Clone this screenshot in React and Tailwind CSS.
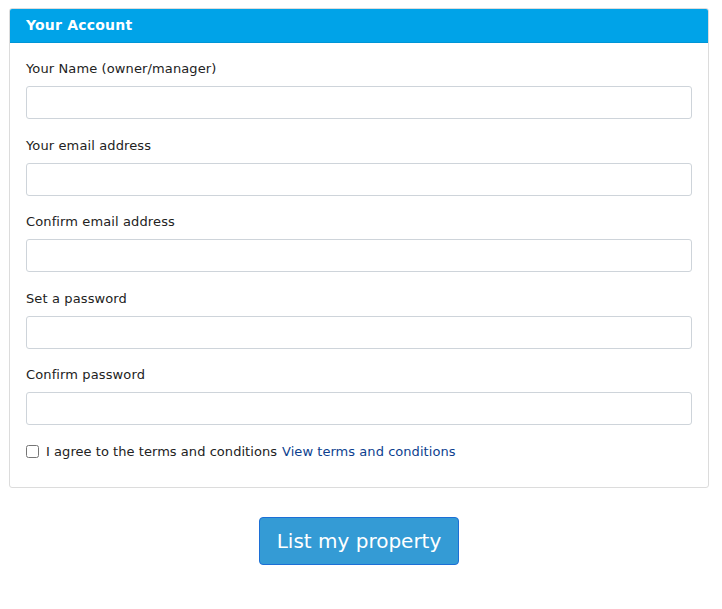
export default function App() {
    const fields = [
        'Your Name (owner/manager)',
        'Your email address',
        'Confirm email address',
        'Set a password',
        'Confirm password',
    ];

    return (
        <div className="min-h-screen bg-white pt-[8px] pl-[9px] text-[#222]" style={{ fontFamily: '"DejaVu Sans", Verdana, sans-serif' }}>
            <div className="w-[700px] rounded-[3px] border border-[#dcdcdc]">
                <div className="h-[34px] rounded-t-[2px] bg-[#00a3e8] px-4 flex items-center border-b border-[#0095d6]">
                    <span className="text-[14px] font-bold text-white tracking-[0.2px]">Your Account</span>
                </div>
                <div className="px-4 pt-[16px] pb-[25px]">
                    {fields.map((label) => (
                        <div key={label} className="mb-[16.5px]">
                            <label className="block h-[20px] leading-[20px] text-[13px] mb-[7px] tracking-[0.12px]">{label}</label>
                            <input
                                type="text"
                                className="block w-full h-[33px] rounded-[3px] border border-[#ced4da] bg-white px-3 text-[13px] focus:outline-none"
                            />
                        </div>
                    ))}
                    <div className="flex items-center h-[20px] text-[13px] tracking-[0.05px]">
                        <input type="checkbox" className="w-[13px] h-[13px] mr-[7px] m-0" />
                        <span>I agree to the terms and conditions</span>
                        <a href="#" className="ml-[5px] text-[#0d3f8f]">View terms and conditions</a>
                    </div>
                </div>
            </div>
            <div className="w-[700px] flex justify-center mt-[29px]">
                <button className="w-[200px] h-[48px] rounded-[4px] border border-[#1c6fd6] bg-[#349bd5] text-white text-[20px]">
                    List my property
                </button>
            </div>
        </div>
    );
}
